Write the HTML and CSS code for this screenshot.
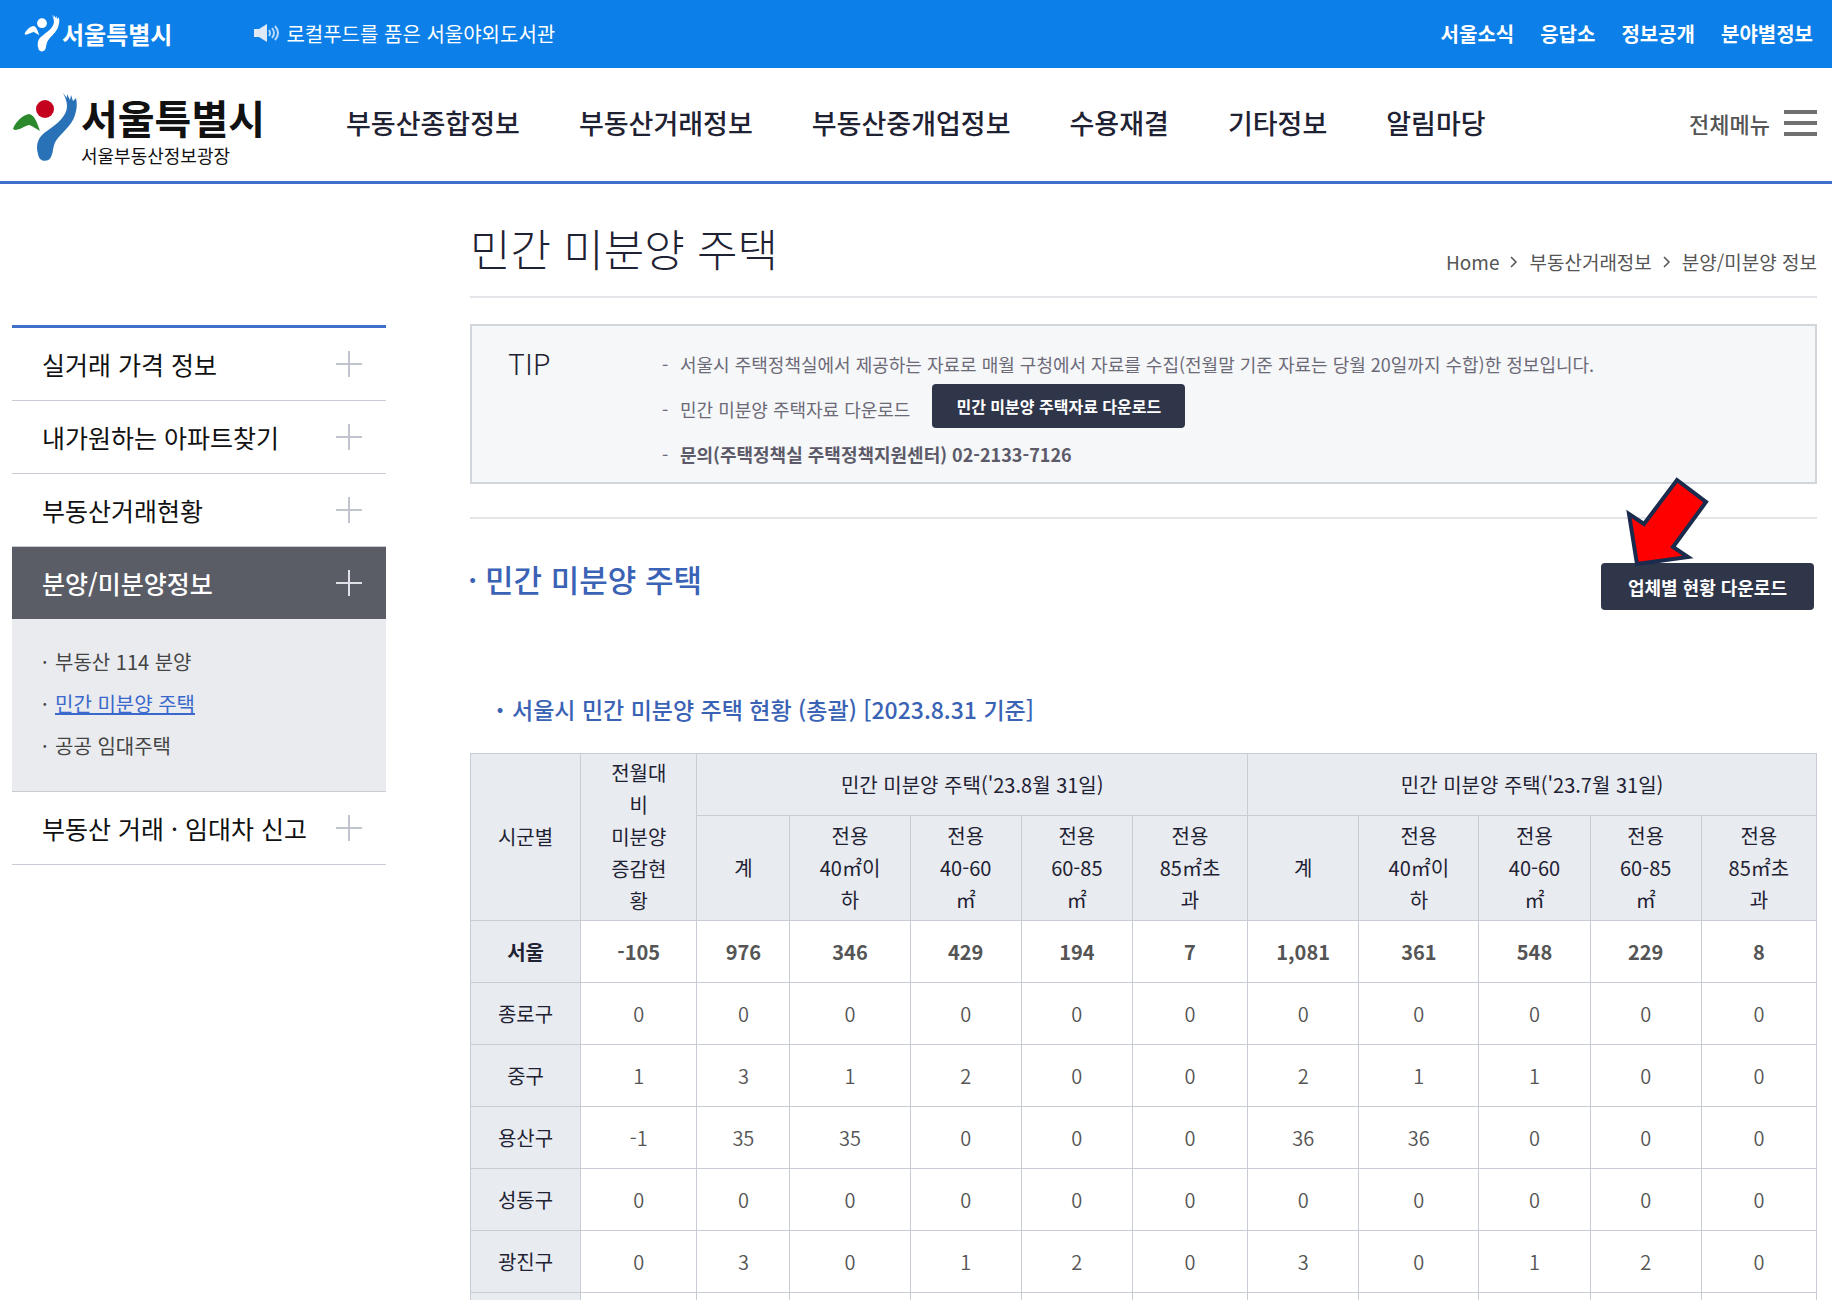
FILE: index.html
```html
<!DOCTYPE html>
<html lang="ko">
<head>
  <meta charset="UTF-8">
  <meta name="viewport" content="width=device-width, initial-scale=1.0">
  <title>민간 미분양 주택</title>
  <link rel="stylesheet" href="styles.css">
</head>
<body>
  <svg class="defs" width="0" height="0" aria-hidden="true">
    <symbol id="seoul" viewBox="0 0 66 70">
      <path class="leaf" d="M1 37C2 32 10 23 17 22C23 23 25 31 28 39C24 37 21 34 17 33C12 34 8 38 3 38Z"/>
      <ellipse class="sun" cx="33" cy="17" rx="9" ry="9"/>
      <path class="river" d="M51 1L55 6L55 2L58 8L59 3L61 9L64 6C65 11 65 15 64 19C62 31 53 38 46 46C40 53 42 59 39 65C36 71 27 70 26 62C23 52 27 44 35 39C45 32 55 24 55 14C55 9 53 5 51 1Z"/>
    </symbol>
    <symbol id="plus" viewBox="0 0 26 26">
      <path d="M13 0V26M0 13H26" stroke="currentColor" stroke-width="2"/>
    </symbol>
    <symbol id="chevron" viewBox="0 0 8 14">
      <path d="M1 2L6 7L1 12" fill="none" stroke="currentColor" stroke-width="1.5"/>
    </symbol>
  </svg>

  <div class="topbar">
    <a href="#" class="top-logo"><svg class="mark"><use href="#seoul"/></svg>서울특별시</a>
    <a href="#" class="notice">
      <svg viewBox="0 0 26 18" width="26" height="18" aria-hidden="true">
        <path d="M0 5H5L13 0V18L5 13H0Z" fill="#dfe9f5"/>
        <path d="M15 6Q17 9 15 12M18 4Q22 9 18 14M21 2Q27 9 21 16" fill="none" stroke="#b9d8f7" stroke-width="2"/>
      </svg>
      로컬푸드를 품은 서울야외도서관
    </a>
    <nav class="top-links">
      <a href="#">서울소식</a>
      <a href="#">응답소</a>
      <a href="#">정보공개</a>
      <a href="#">분야별정보</a>
    </nav>
  </div>

  <header>
    <a href="#" class="logo">
      <svg class="mark"><use href="#seoul"/></svg>
      <span class="logo-text">
        <strong>서울특별시</strong>
        <span>서울부동산정보광장</span>
      </span>
    </a>
    <nav class="gnb">
      <a href="#">부동산종합정보</a>
      <a href="#">부동산거래정보</a>
      <a href="#">부동산중개업정보</a>
      <a href="#">수용재결</a>
      <a href="#">기타정보</a>
      <a href="#">알림마당</a>
    </nav>
    <button class="all-menu">전체메뉴 <span class="bars"><i></i><i></i><i></i></span></button>
  </header>

  <div class="container">
    <aside>
      <a href="#" class="menu">실거래 가격 정보 <svg><use href="#plus"/></svg></a>
      <a href="#" class="menu">내가원하는 아파트찾기 <svg><use href="#plus"/></svg></a>
      <a href="#" class="menu">부동산거래현황 <svg><use href="#plus"/></svg></a>
      <a href="#" class="menu active">분양/미분양정보 <svg><use href="#plus"/></svg></a>
      <ul class="submenu">
        <li><a href="#">부동산 114 분양</a></li>
        <li><a href="#" class="on">민간 미분양 주택</a></li>
        <li><a href="#">공공 임대주택</a></li>
      </ul>
      <a href="#" class="menu">부동산 거래 · 임대차 신고 <svg><use href="#plus"/></svg></a>
    </aside>

    <main>
      <div class="title">
        <h1>민간 미분양 주택</h1>
        <div class="breadcrumb">
          <a href="#">Home</a>
          <svg><use href="#chevron"/></svg>
          <a href="#">부동산거래정보</a>
          <svg><use href="#chevron"/></svg>
          <a href="#">분양/미분양 정보</a>
        </div>
      </div>

      <section class="tip">
        <h4>TIP</h4>
        <ul>
          <li>서울시 주택정책실에서 제공하는 자료로 매월 구청에서 자료를 수집(전월말 기준 자료는 당월 20일까지 수합)한 정보입니다.</li>
          <li>민간 미분양 주택자료 다운로드 <button class="btn btn-small">민간 미분양 주택자료 다운로드</button></li>
          <li><b>문의(주택정책실 주택정책지원센터) 02-2133-7126</b></li>
        </ul>
      </section>

      <section class="status">
        <div class="status-head">
          <h2>민간 미분양 주택</h2>
          <div class="download">
            <button class="btn">업체별 현황 다운로드</button>
            <svg class="arrow" viewBox="0 0 86 95" width="86" height="95" aria-hidden="true">
              <path d="M52 5L81 27L48 72L63 82L12 89L4 39L19 49Z" fill="#ff0000" stroke="#1b2b4d" stroke-width="4"/>
            </svg>
          </div>
        </div>

        <h3>서울시 민간 미분양 주택 현황 (총괄) [2023.8.31 기준]</h3>
        <table>
          <colgroup>
            <col class="w-name"><col class="w-diff">
            <col class="w-sum8"><col class="w-40"><col class="w-60"><col class="w-60"><col class="w-over">
            <col class="w-60"><col class="w-40"><col class="w-60"><col class="w-60"><col class="w-over">
          </colgroup>
          <thead>
            <tr>
              <th rowspan="2">시군별</th>
              <th rowspan="2">전월대비<br>미분양증감현황</th>
              <th colspan="5">민간 미분양 주택('23.8월 31일)</th>
              <th colspan="5">민간 미분양 주택('23.7월 31일)</th>
            </tr>
            <tr class="sizes">
              <th>계</th>
              <th>전용<br>40㎡이하</th>
              <th>전용<br>40-60㎡</th>
              <th>전용<br>60-85㎡</th>
              <th>전용<br>85㎡초과</th>
              <th>계</th>
              <th>전용<br>40㎡이하</th>
              <th>전용<br>40-60㎡</th>
              <th>전용<br>60-85㎡</th>
              <th>전용<br>85㎡초과</th>
            </tr>
          </thead>
          <tbody>
            <tr class="total"><th>서울</th><td>-105</td><td>976</td><td>346</td><td>429</td><td>194</td><td>7</td><td>1,081</td><td>361</td><td>548</td><td>229</td><td>8</td></tr>
            <tr><th>종로구</th><td>0</td><td>0</td><td>0</td><td>0</td><td>0</td><td>0</td><td>0</td><td>0</td><td>0</td><td>0</td><td>0</td></tr>
            <tr><th>중구</th><td>1</td><td>3</td><td>1</td><td>2</td><td>0</td><td>0</td><td>2</td><td>1</td><td>1</td><td>0</td><td>0</td></tr>
            <tr><th>용산구</th><td>-1</td><td>35</td><td>35</td><td>0</td><td>0</td><td>0</td><td>36</td><td>36</td><td>0</td><td>0</td><td>0</td></tr>
            <tr><th>성동구</th><td>0</td><td>0</td><td>0</td><td>0</td><td>0</td><td>0</td><td>0</td><td>0</td><td>0</td><td>0</td><td>0</td></tr>
            <tr><th>광진구</th><td>0</td><td>3</td><td>0</td><td>1</td><td>2</td><td>0</td><td>3</td><td>0</td><td>1</td><td>2</td><td>0</td></tr>
            <tr><th></th><td></td><td></td><td></td><td></td><td></td><td></td><td></td><td></td><td></td><td></td><td></td></tr>
          </tbody>
        </table>
      </section>
    </main>
  </div>
</body>
</html>
```
FILE: styles.css
```css
* {
  box-sizing: border-box;
}
body {
  margin: 0;
  font-family: "Noto Sans CJK KR", "Noto Sans", sans-serif;
  color: #1f2233;
  background: #fff;
}
a {
  color: inherit;
  text-decoration: none;
}
h1, h2, h3, h4, ul {
  margin: 0;
  padding: 0;
}
ul {
  list-style: none;
}
button {
  font-family: inherit;
  border: none;
  cursor: pointer;
}
.defs {
  position: absolute;
}

/* city mark, white unless the colours are set */
.leaf {
  fill: var(--leaf, #fff);
}
.sun {
  fill: var(--sun, #fff);
}
.river {
  fill: var(--river, #fff);
}

/* top bar */
.topbar {
  display: flex;
  align-items: center;
  height: 68px;
  padding: 0 19px 2px 24px;
  background: #0c80e8;
  color: #fff;
  font-size: 20px;
}
.top-logo {
  display: flex;
  align-items: center;
  gap: 2px;
  font-size: 24px;
  font-weight: 700;
}
.top-logo .mark {
  width: 36px;
  height: 38px;
}
.notice {
  display: flex;
  align-items: center;
  gap: 6px;
  margin-left: 82px;
}
.top-links {
  display: flex;
  gap: 26px;
  margin-left: auto;
  font-weight: 700;
}

/* header */
header {
  display: flex;
  align-items: center;
  height: 116px;
  padding: 0 15px 4px 12px;
  border-bottom: 3px solid #3f6fca;
}
.logo {
  display: flex;
  align-items: center;
  gap: 3px;
  width: 334px;
  padding-top: 8px;
  color: #111;
}
.logo .mark {
  --leaf: #2c8a2c;
  --sun: #c4021e;
  --river: #2a72b8;
  width: 66px;
  height: 70px;
}
.logo-text {
  display: flex;
  flex-direction: column;
  padding-top: 8px;
  font-size: 18px;
  line-height: 28px;
}
.logo-text strong {
  font-size: 40px;
  line-height: 48px;
}
.gnb {
  display: flex;
  gap: 59px;
  font-size: 27px;
  font-weight: 500;
}
.all-menu {
  display: flex;
  align-items: center;
  gap: 14px;
  margin-left: auto;
  padding: 0;
  background: none;
  color: #555;
  font-size: 22px;
  font-weight: 500;
}
.bars {
  display: flex;
  flex-direction: column;
  gap: 7px;
  width: 33px;
}
.bars i {
  height: 4px;
  background: #707070;
}

/* layout */
.container {
  display: flex;
  align-items: flex-start;
  gap: 84px;
  padding: 0 15px 0 12px;
}
aside {
  flex: 0 0 374px;
  margin-top: 141px;
  border-top: 3px solid #3f6fca;
}
.menu {
  display: flex;
  justify-content: space-between;
  align-items: center;
  height: 73px;
  padding: 0 24px 0 30px;
  border-bottom: 1px solid #c8ccd5;
  color: #111;
  font-size: 25px;
}
.menu svg {
  width: 26px;
  height: 26px;
  color: #c0c4cf;
}
.menu.active {
  height: 72px;
  border-bottom: none;
  background: #5a5d66;
  color: #fff;
  font-weight: 500;
}
.menu.active svg {
  color: #dfe1e6;
}
.submenu {
  padding: 22px 30px 24px;
  background: #e9ebee;
  border-bottom: 1px solid #c8ccd5;
  color: #444;
  font-size: 20px;
  line-height: 42px;
}
.submenu li::before {
  content: "·";
  display: inline-block;
  width: 13px;
}
.submenu .on {
  color: #3a68cc;
  text-decoration: underline;
}

/* content */
main {
  flex: 1;
  min-width: 0;
}
.title {
  display: flex;
  justify-content: space-between;
  align-items: flex-end;
  height: 114px;
  padding-bottom: 16px;
  border-bottom: 2px solid #e4e5e8;
}
h1 {
  font-size: 44px;
  font-weight: 300;
  line-height: 64px;
}
.breadcrumb {
  display: flex;
  align-items: center;
  gap: 11px;
  color: #555;
  font-size: 19px;
  line-height: 36px;
}
.breadcrumb svg {
  width: 8px;
  height: 14px;
}
.tip {
  display: flex;
  margin-top: 26px;
  padding: 18px 36px 8px;
  border: 2px solid #d1d5dc;
  background: #f5f7f9;
}
.tip h4 {
  flex: 0 0 154px;
  font-size: 29px;
  font-weight: 300;
  line-height: 36px;
}
.tip li {
  display: flex;
  align-items: center;
  color: #6d6a78;
  font-size: 18px;
  line-height: 40px;
}
.tip li::before {
  content: "-";
  width: 18px;
}
.tip b {
  color: #5c5a68;
}
.btn {
  height: 47px;
  padding: 0 27px;
  border-radius: 4px;
  background: #30364a;
  color: #fff;
  font-size: 18px;
  font-weight: 700;
}
.btn-small {
  height: 44px;
  margin: 0 0 6px 22px;
  padding: 0 24px;
  font-size: 16px;
}
.status {
  margin-top: 33px;
  border-top: 2px solid #e4e5e8;
}
.status-head {
  display: flex;
  justify-content: space-between;
  align-items: center;
  margin-top: 28px;
  padding-right: 3px;
}
h2, h3 {
  color: #3a62b5;
  font-weight: 500;
}
h2 {
  font-size: 31px;
  line-height: 48px;
}
h2::before {
  content: "·";
  display: inline-block;
  width: 15px;
  text-indent: -2px;
}
.download {
  position: relative;
  margin-top: 16px;
}
.download .btn {
  display: block;
}
/* pointer lying over the button's top left corner */
.arrow {
  position: absolute;
  left: 24px;
  top: -88px;
}
h3 {
  margin-top: 81px;
  padding-left: 26px;
  font-size: 23px;
  line-height: 36px;
}
h3::before {
  content: "·";
  display: inline-block;
  width: 16px;
  font-weight: 900;
}

table {
  width: 100%;
  margin-top: 26px;
  border-collapse: collapse;
  table-layout: fixed;
  font-size: 20px;
  line-height: 32px;
  text-align: center;
}
th, td {
  height: 62px;
  padding: 4px 22px;
  border: 1px solid #c8ccd5;
}
th {
  background: #e8ebf0;
  font-weight: 400;
}
thead th {
  padding: 3px 22px;
}
.sizes th {
  padding: 4px 22px;
}
td {
  color: #555;
  font-weight: 350;
}
.total th, .total td {
  font-weight: 700;
}
.w-name { width: 110px; }
.w-diff { width: 116px; }
.w-sum8 { width: 93px; }
.w-40 { width: 120px; }
.w-60 { width: 111px; }
.w-over { width: 115px; }
```
